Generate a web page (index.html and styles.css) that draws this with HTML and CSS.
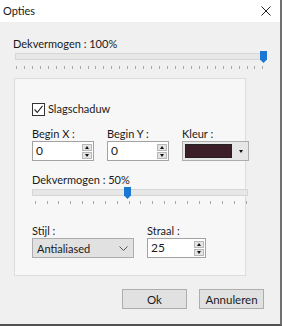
FILE: index.html
```html
<!DOCTYPE html>
<html>
<head>
<meta charset="utf-8">
<link rel="stylesheet" href="styles.css">
</head>
<body>
<div class="window">
  <div class="titlebar">
    <span class="title">Opties</span>
    <svg class="close" width="10" height="10" viewBox="0 0 10 10"><path d="M0.5 0.5 L9.5 9.5 M9.5 0.5 L0.5 9.5" stroke="#222" stroke-width="1" fill="none"/></svg>
  </div>
  <div class="content">
    <div class="label top-label">Dekvermogen : 100%</div>
    <div class="slider s1">
      <div class="track"></div>
      <div class="thumb" style="left:247px"></div>
      <div class="ticks t1"></div>
    </div>
    <div class="group">
      <div class="check-row">
        <span class="checkbox"><svg width="11" height="11" viewBox="0 0 11 11"><path d="M1.5 5.5 L4.3 8.5 L9.5 1.8" stroke="#222" stroke-width="1.1" fill="none"/></svg></span>
        <span class="label">Slagschaduw</span>
      </div>
      <div class="fields">
        <div class="field">
          <div class="label">Begin X :</div>
          <div class="input spin w62"><span class="val">0</span><span class="spinbtns"><span class="sb up"></span><span class="sb down"></span></span></div>
        </div>
        <div class="field">
          <div class="label">Begin Y :</div>
          <div class="input spin w62"><span class="val">0</span><span class="spinbtns"><span class="sb up"></span><span class="sb down"></span></span></div>
        </div>
        <div class="field">
          <div class="label">Kleur :</div>
          <div class="colorbox"><span class="swatch"></span><span class="dd"></span></div>
        </div>
      </div>
      <div class="label mid-label">Dekvermogen : 50%</div>
      <div class="slider s2">
        <div class="track"></div>
        <div class="thumb" style="left:92px"></div>
        <div class="ticks t2"></div>
      </div>
      <div class="fields bottom-fields">
        <div class="field">
          <div class="label">Stijl :</div>
          <div class="select"><span>Antialiased</span><svg width="9" height="5" viewBox="0 0 9 5"><path d="M0.5 0.5 L4.5 4.5 L8.5 0.5" stroke="#555" stroke-width="1" fill="none"/></svg></div>
        </div>
        <div class="field">
          <div class="label">Straal :</div>
          <div class="input spin w60"><span class="val">25</span><span class="spinbtns"><span class="sb up"></span><span class="sb down"></span></span></div>
        </div>
      </div>
    </div>
    <div class="buttons">
      <button class="btn">Ok</button>
      <button class="btn">Annuleren</button>
    </div>
  </div>
</div>
</body>
</html>
```
FILE: styles.css
```css
html, body {
  margin: 0;
  padding: 0;
  background: #f0f0f0;
}
body {
  font-family: Lato, "Noto Sans", sans-serif;
  font-size: 11px;
  color: #1a1a1a;
}
.window {
  width: 280px;
  height: 324px;
  background: #f0f0f0;
  border-right: 2px solid #707070;
  border-bottom: 2px solid #505050;
  display: flex;
  flex-direction: column;
}
.titlebar {
  height: 22px;
  background: #ffffff;
  display: flex;
  align-items: center;
  justify-content: space-between;
  padding: 0 9px 0 3px;
  flex: none;
}
.title {
  line-height: 14px;
  margin-top: -1px;
}
.close {
  display: block;
}
.content {
  padding: 0 0 0 13px;
  display: flex;
  flex-direction: column;
}
.label {
  line-height: 14px;
  white-space: nowrap;
}
.top-label {
  margin-top: 15px;
}
.slider {
  position: relative;
  flex: none;
}
.s1 {
  width: 251px;
  height: 18px;
}
.track {
  height: 5px;
  background: #e7e7e7;
  border: 1px solid #d6d6d6;
  margin-top: 2px;
}
.s1 .track { margin-left: 2px; width: 246px; }
.thumb {
  position: absolute;
  top: 0;
  width: 7px;
  height: 12px;
  background: #1a78d2;
  clip-path: polygon(0 0, 100% 0, 100% 70%, 50% 100%, 0 70%);
}
.ticks {
  margin-top: 6px;
  height: 3px;
}
.t1 {
  margin-left: 3px;
  width: 248px;
  background: repeating-linear-gradient(to right, #a8a8a8 0 1px, transparent 1px 7.95px);
}
.group {
  width: 232px;
  margin-top: 9px;
  margin-left: 1px;
  height: 198px;
  background: #f7f7f7;
  border: 1px solid #dddddd;
  padding: 0 0 0 17px;
  box-sizing: border-box;
  display: flex;
  flex-direction: column;
  flex: none;
}
.check-row {
  display: flex;
  align-items: center;
  margin-top: 23px;
  gap: 3px;
}
.checkbox {
  width: 11px;
  height: 11px;
  border: 1px solid #333;
  background: #fff;
  display: flex;
}
.fields {
  display: flex;
  margin-top: 11px;
}
.field {
  display: flex;
  flex-direction: column;
}
.field + .field { margin-left: 13px; }
.input {
  height: 20px;
  box-sizing: border-box;
  background: #fff;
  border: 1px solid #a3a3a3;
  display: flex;
  align-items: center;
  justify-content: space-between;
  padding: 0 1px 0 3px;
}
.w62 { width: 62px; }
.w60 { width: 59px; }
.val {
  line-height: 14px;
  font-size: 12px;
}
.spinbtns {
  display: flex;
  flex-direction: column;
  gap: 1px;
}
.sb {
  width: 10px;
  height: 7px;
  background: #e4e4e4;
  border: 1px solid #b8b8b8;
  box-sizing: border-box;
  position: relative;
}
.sb::after {
  content: "";
  position: absolute;
  left: 2px;
  width: 0;
  height: 0;
  border-left: 2px solid transparent;
  border-right: 2px solid transparent;
}
.sb.up::after { top: 1px; border-bottom: 3px solid #111; }
.sb.down::after { top: 1px; border-top: 3px solid #111; }
.colorbox {
  width: 67px;
  height: 20px;
  box-sizing: border-box;
  border: 1px solid #adadad;
  background: #e6e6e6;
  display: flex;
  align-items: center;
  padding: 2px;
  gap: 2px;
}
.swatch {
  width: 47px;
  height: 14px;
  background: #3b1e27;
  border: 1px solid #222;
  box-sizing: border-box;
}
.dd {
  flex: 1;
  height: 14px;
  position: relative;
}
.dd::after {
  content: "";
  position: absolute;
  left: 5px;
  top: 6px;
  border-left: 2px solid transparent;
  border-right: 2px solid transparent;
  border-top: 3px solid #111;
}
.mid-label {
  margin-top: 12px;
}
.s2 {
  width: 217px;
  height: 17px;
}
.s2 .track { width: 214px; }
.s2 .ticks { margin-top: 5px; }
.t2 {
  margin-left: 3px;
  width: 212px;
  background: repeating-linear-gradient(to right, #a8a8a8 0 1px, transparent 1px 11.7px);
}
.bottom-fields {
  margin-top: 20px;
}
.select {
  width: 102px;
  height: 20px;
  box-sizing: border-box;
  background: #e1e1e1;
  border: 1px solid #adadad;
  display: flex;
  align-items: center;
  justify-content: space-between;
  padding: 0 5px 0 4px;
}
.buttons {
  display: flex;
  justify-content: flex-end;
  gap: 12px;
  margin-top: 13px;
  padding-right: 16px;
}
.btn {
  width: 65px;
  height: 20px;
  background: #e1e1e1;
  border: 1px solid #adadad;
  font-family: inherit;
  font-size: 11.5px;
  color: #1a1a1a;
  padding: 0;
}
```
